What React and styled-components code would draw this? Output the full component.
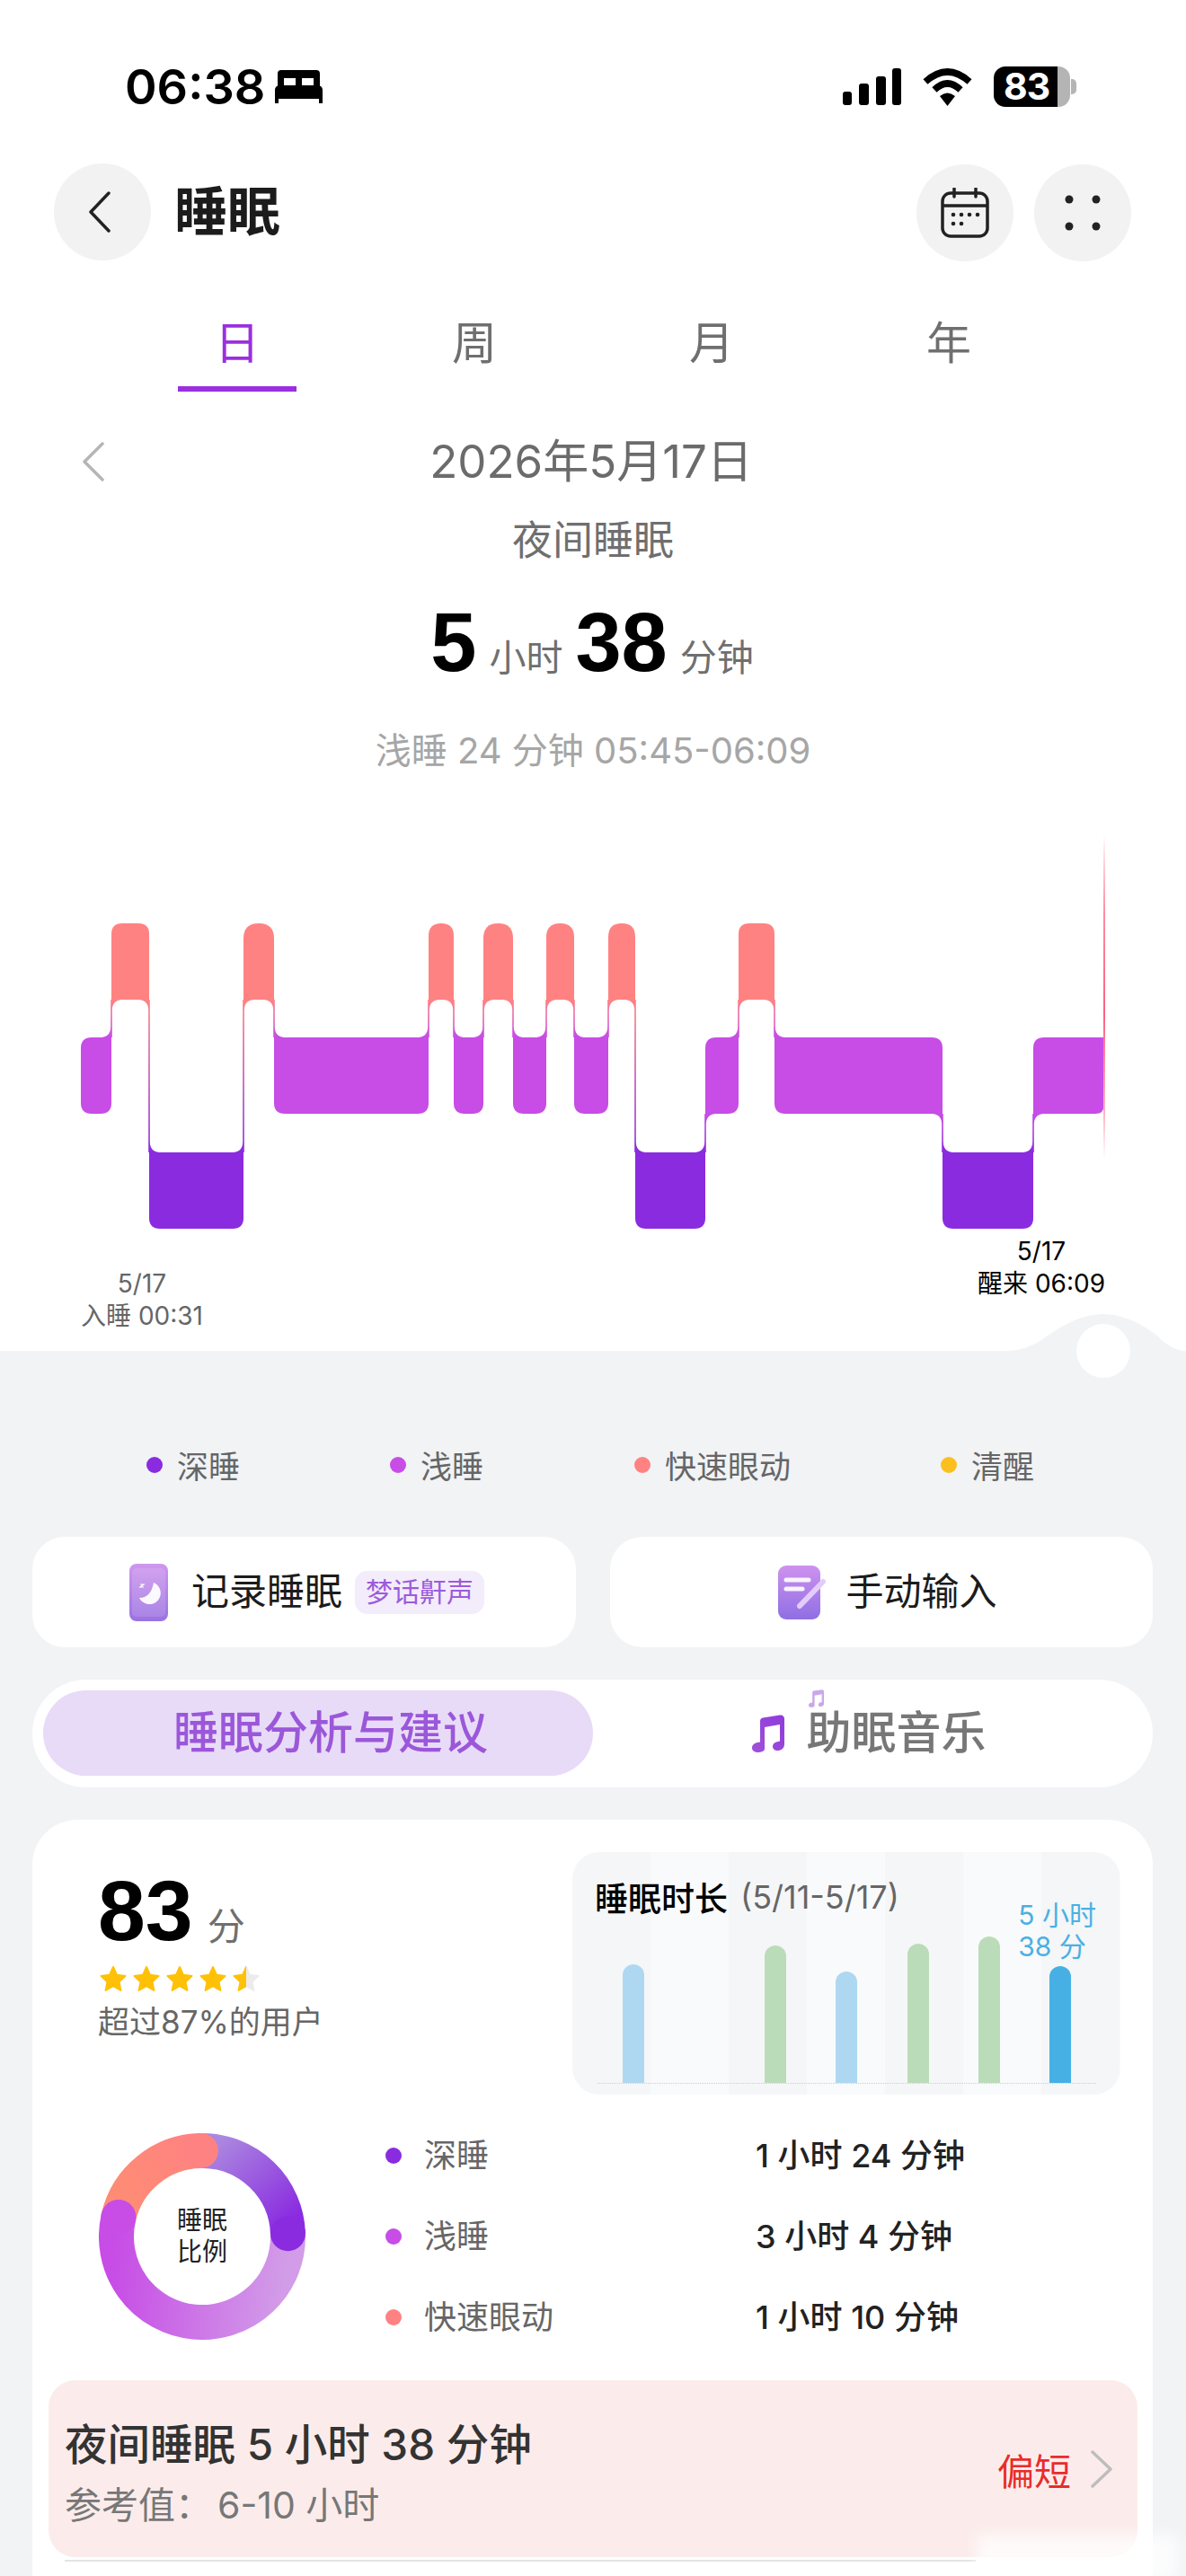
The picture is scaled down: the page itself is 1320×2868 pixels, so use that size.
import React from "react"
import styled, { createGlobalStyle } from "styled-components"

const FONT = `Inter, "Noto Sans CJK SC", sans-serif`
const DEEP = "#8a2be0"
const LIGHT = "#c74de6"
const REM = "#ff8282"
const AWAKE = "#fcbf20"

const GlobalStyle = createGlobalStyle`
  html, body {
    margin: 0;
    padding: 0;
    background: #f1f3f5;
    font-family: ${FONT};
  }
  * { box-sizing: border-box; }
`

const Page = styled.div`
  position: relative;
  width: 1320px;
  height: 2868px;
  overflow: hidden;
  background: #f1f3f5;
`
const TopSection = styled.section`
  position: relative;
  height: 1504px;
  padding-top: 74px;
  background: #fff;
`
const StatusBar = styled.div`
  display: flex;
  justify-content: space-between;
  align-items: center;
  height: 45px;
  padding: 0 129px 0 139px;
`
const StatusLeft = styled.div`
  display: flex;
  align-items: center;
  gap: 11px;
`
const Clock = styled.span`
  font-size: 54px;
  font-weight: 600;
  line-height: 45px;
  color: #000;
`
const StatusRight = styled.div`
  display: flex;
  align-items: center;
  gap: 23px;
`
const Battery = styled.div`
  position: relative;
  width: 85px;
  height: 45px;
  border-radius: 13px;
  background: linear-gradient(90deg, #000 84%, #b4b4b4 84%);
  color: #fff;
  font-size: 41px;
  font-weight: 700;
  line-height: 45px;
  padding-left: 11px;
  letter-spacing: -1px;
  &::after {
    content: "";
    position: absolute;
    right: -7px;
    top: 14px;
    width: 6px;
    height: 17px;
    border-radius: 0 5px 5px 0;
    background: #b4b4b4;
  }
`
const NavBar = styled.div`
  display: flex;
  align-items: center;
  margin-top: 62px;
  padding: 0 61px 0 60px;
`
const RoundButton = styled.button`
  display: flex;
  align-items: center;
  justify-content: center;
  width: 108px;
  height: 108px;
  padding: 0 ${(p) => p.$inset || 0}px 0 0;
  border: 0;
  border-radius: 50%;
  background: #f2f2f2;
  margin-top: ${(p) => p.$offset || 0}px;
`
const Title = styled.h1`
  flex: 1;
  margin: 0 0 10px 26px;
  font-size: 59px;
  font-weight: 700;
  color: #1c1c1c;
`
const NavActions = styled.div`
  display: flex;
  gap: 23px;
`
const Tabs = styled.div`
  display: grid;
  grid-template-columns: repeat(4, 264px);
  margin: 51px 0 0 132px;
`
const Tab = styled.div`
  display: flex;
  flex-direction: column;
  align-items: center;
  font-size: 50px;
  line-height: 80px;
  height: 94px;
  color: ${(p) => (p.$active ? "#9b2fe0" : "#6f6f6f")};
`
const TabMark = styled.div`
  width: 132px;
  height: 6px;
  margin-top: 8px;
  background: #9b2fe0;
`
const DateRow = styled.div`
  display: grid;
  grid-template-columns: 1fr auto 1fr;
  align-items: center;
  height: 60px;
  margin-top: 37px;
  padding-right: 4px;
  font-size: 51px;
  color: #6b6b6b;
`
const DateBack = styled.div`
  display: flex;
  padding: 8px 0 0 92px;
`
const Caption = styled.div`
  height: 56px;
  margin-top: 41px;
  font-size: 45px;
  line-height: 56px;
  text-align: center;
  color: #6f6f6f;
`
const Duration = styled.div`
  display: flex;
  justify-content: center;
  align-items: baseline;
  gap: 14px;
  height: 96px;
  margin-top: 37px;
  padding-right: 2px;
  line-height: 96px;
`
const BigNumber = styled.span`
  font-family: "Liberation Sans", sans-serif;
  font-size: 92px;
  font-weight: 700;
  color: #000;
`
const Unit = styled.span`
  font-size: 41px;
  color: #6f6f6f;
`
const Detail = styled.div`
  height: 56px;
  margin-top: 45px;
  font-size: 40px;
  line-height: 56px;
  text-align: center;
  color: #a6a6a6;
`
const ChartSvg = styled.svg`
  display: block;
  width: 1320px;
  height: 460px;
  margin-top: 56px;
`
const ChartLabels = styled.div`
  display: flex;
  justify-content: space-between;
  align-items: flex-end;
  padding: 0 90px 0 90px;
  margin-top: -5px;
`
const ChartLabel = styled.div`
  font-size: 28px;
  line-height: 36px;
  text-align: center;
  white-space: nowrap;
  color: ${(p) => (p.$end ? "#000" : "#666")};
  margin-top: ${(p) => (p.$end ? 0 : 36)}px;
  margin-bottom: ${(p) => (p.$end ? 36 : 0)}px;
`
const Bump = styled.svg`
  position: absolute;
  left: 1120px;
  top: 1456px;
  width: 200px;
  height: 84px;
`
const Legend = styled.div`
  display: grid;
  grid-template-columns: 271px 272px 341px auto;
  height: 48px;
  margin: 101px 0 0 163px;
`
const LegendItem = styled.div`
  display: flex;
  align-items: center;
  gap: 16px;
  font-size: 35px;
  color: #666;
`
const Dot = styled.i`
  flex: none;
  display: block;
  width: 18px;
  height: 18px;
  border-radius: 50%;
  background: ${(p) => p.$color};
`
const ActionRow = styled.div`
  display: grid;
  grid-template-columns: 605px 604px;
  gap: 38px;
  margin: 58px 0 0 36px;
`
const ActionCard = styled.div`
  display: flex;
  align-items: center;
  justify-content: ${(p) => (p.$center ? "center" : "flex-start")};
  gap: ${(p) => (p.$center ? 21 : 26)}px;
  height: 123px;
  padding-left: ${(p) => (p.$center ? "14px" : "108px")};
  border-radius: 36px;
  background: #fff;
  font-size: 42px;
  color: #1c1c1c;
`
const ActionText = styled.span`
  padding-bottom: 8px;
  white-space: nowrap;
`
const Chip = styled.span`
  margin-left: -12px;
  padding: 0 12px;
  height: 48px;
  border-radius: 14px;
  background: #f3ecfb;
  color: #9c5bdc;
  font-size: 30px;
  line-height: 46px;
  white-space: nowrap;
`
const Segmented = styled.div`
  display: grid;
  grid-template-columns: 612px 1fr;
  height: 120px;
  margin: 36px 37px 0 36px;
  padding: 12px;
  border-radius: 60px;
  background: #fff;
`
const SegmentItem = styled.div`
  position: relative;
  display: flex;
  align-items: center;
  justify-content: center;
  gap: 24px;
  height: 95px;
  padding-left: ${(p) => (p.$active ? 28 : 0)}px;
  border-radius: 48px;
  background: ${(p) => (p.$active ? "#e8dbf7" : "transparent")};
  color: ${(p) => (p.$active ? "#9b57d9" : "#777")};
  font-size: 50px;
  font-weight: 500;
`
const SegmentLabel = styled.span`
  padding-bottom: 10px;
`
const SmallNote = styled.svg`
  position: absolute;
  left: 238px;
  top: -1px;
  width: 20px;
  height: 20px;
`
const MainCard = styled.div`
  height: 900px;
  margin: 36px 37px 0 36px;
  padding-top: 36px;
  border-radius: 50px 50px 0 0;
  background: #fff;
`
const Overview = styled.div`
  display: flex;
  justify-content: space-between;
  padding: 0 36px 0 73px;
`
const ScoreBlock = styled.div`
  display: flex;
  flex-direction: column;
  align-items: flex-start;
`
const ScoreLine = styled.div`
  display: flex;
  align-items: baseline;
  gap: 16px;
  height: 108px;
  margin-top: 11px;
  line-height: 108px;
`
const ScoreValue = styled.span`
  font-family: "Liberation Sans", sans-serif;
  font-size: 95px;
  font-weight: 700;
  color: #000;
`
const ScoreUnit = styled.span`
  font-size: 42px;
  color: #6f6f6f;
`
const Stars = styled.div`
  display: flex;
  gap: 7px;
  margin: 7px 0 0 2px;
`
const ScoreNote = styled.div`
  margin-top: 9px;
  font-size: 35px;
  line-height: 48px;
  color: #666;
`
const TrendCard = styled.div`
  width: 610px;
  height: 270px;
  padding: 26px 27px 0 25px;
  border-radius: 30px;
  background: repeating-linear-gradient(90deg, #f5f6f8 0 87px, #f9fafb 87px 174px);
`
const TrendTitle = styled.div`
  display: flex;
  align-items: center;
  gap: 14px;
  height: 48px;
  font-size: 37px;
  font-weight: 500;
  color: #000;
`
const TrendRange = styled.span`
  font-size: 36px;
  font-weight: 400;
  color: #666;
`
const TrendPlot = styled.div`
  display: grid;
  grid-template-columns: repeat(7, 1fr);
  align-items: end;
  justify-items: center;
  width: 555px;
  height: 184px;
  margin: 0 0 0 3px;
  border-bottom: 1px dotted #c9cdd0;
`
const TrendBar = styled.div`
  position: relative;
  width: 24px;
  height: ${(p) => p.$h}px;
  border-radius: 12px 12px 0 0;
  background: ${(p) => p.$color};
`
const TrendTip = styled.div`
  position: absolute;
  left: -35px;
  bottom: 100%;
  margin-bottom: 4px;
  width: 100px;
  font-size: 30px;
  line-height: 35px;
  color: #4ab0e3;
  white-space: nowrap;
`
const Proportion = styled.div`
  display: flex;
  align-items: center;
  height: 270px;
  margin-top: 23px;
  padding-left: 74px;
`
const DonutWrap = styled.div`
  position: relative;
  flex: none;
  width: 230px;
  height: 230px;
`
const DonutText = styled.div`
  position: absolute;
  inset: 0;
  display: flex;
  align-items: center;
  justify-content: center;
  font-size: 28px;
  line-height: 35px;
  text-align: center;
  color: #222;
`
const StatList = styled.div`
  margin-left: 89px;
`
const StatRow = styled.div`
  display: grid;
  grid-template-columns: 18px 344px auto;
  column-gap: 25px;
  align-items: center;
  height: 90px;
  font-size: 36px;
  white-space: nowrap;
`
const StatLabel = styled.span`
  padding-bottom: 6px;
  color: #666;
`
const StatValue = styled.span`
  padding-bottom: 6px;
  color: #222;
  font-weight: 500;
`
const Advice = styled.div`
  display: flex;
  justify-content: space-between;
  align-items: center;
  height: 197px;
  margin: 25px 17px 0 18px;
  padding: 0 28px 0 18px;
  border-radius: 30px;
  background: #fbeceb;
`
const AdviceText = styled.div`
  display: flex;
  flex-direction: column;
  gap: 7px;
  padding-top: 14px;
`
const AdviceTitle = styled.div`
  font-size: 47.500px;
  font-weight: 500;
  line-height: 60px;
  color: #333;
`
const AdviceNote = styled.div`
  display: flex;
  gap: 6px;
  font-size: 41px;
  line-height: 60px;
  color: #777;
`
const AdviceStatus = styled.div`
  display: flex;
  align-items: center;
  gap: 22px;
  font-size: 41px;
  color: #e92c2c;
`
const Rule = styled.div`
  height: 2px;
  margin: 3px 197px 0 36px;
  background: #e3e3e3;
`
const Watermark = styled.div`
  position: absolute;
  right: 8px;
  bottom: -6px;
  width: 225px;
  height: 52px;
  background: rgba(255, 255, 255, 0.75);
  filter: blur(8px);
`

const ROWS = { rem: [1028, 1113], light: [1155, 1240], deep: [1283, 1368] }
const LEVEL = { rem: 0, light: 1, deep: 2 }
const COLORS = { rem: REM, light: LIGHT, deep: DEEP }
const SEGMENTS = [
  ["light", 90, 124],
  ["rem", 124, 166],
  ["deep", 166, 271],
  ["rem", 271, 305],
  ["light", 305, 477],
  ["rem", 477, 505],
  ["light", 505, 538],
  ["rem", 538, 571],
  ["light", 571, 608],
  ["rem", 608, 639],
  ["light", 639, 677],
  ["rem", 677, 707],
  ["deep", 707, 785],
  ["light", 785, 822],
  ["rem", 822, 862],
  ["light", 862, 1049],
  ["deep", 1049, 1150],
  ["light", 1150, 1229],
]

// rectangle with its own radius per corner: tl, tr, br, bl
const roundedPath = (x0, y0, x1, y1, [tl, tr, br, bl]) =>
  `M${x0 + tl} ${y0}H${x1 - tr}Q${x1} ${y0} ${x1} ${y0 + tr}V${y1 - br}Q${x1} ${y1} ${x1 - br} ${y1}H${x0 + bl}Q${x0} ${y1} ${x0} ${y1 - bl}V${y0 + tl}Q${x0} ${y0} ${x0 + tl} ${y0}Z`

function SleepChart() {
  const links = []
  const holes = []
  const bars = []
  SEGMENTS.forEach(([stage, x0, x1], i) => {
    const level = LEVEL[stage]
    const prev = SEGMENTS[i - 1]
    const next = SEGMENTS[i + 1]
    const prevLevel = prev ? LEVEL[prev[0]] : level
    const nextLevel = next ? LEVEL[next[0]] : level
    const [top, bottom] = ROWS[stage]
    const w = x1 - x0
    const r = stage === "rem" && w < 40 ? w / 2 : Math.min(12, w / 2)
    const hr = Math.min((w - 2) / 2, 12)
    if (next && nextLevel !== level) {
      const upper = level < nextLevel ? stage : next[0]
      const lower = level < nextLevel ? next[0] : stage
      links.push({ x: x1, upper, lower, id: `link${i}` })
    }
    if (prevLevel < level || nextLevel < level) {
      holes.push(roundedPath(x0 + 0.8, 900, x1 - 0.8, top, [0, 0, hr, hr]))
    }
    if (prevLevel > level || nextLevel > level) {
      holes.push(roundedPath(x0 + 0.8, bottom, x1 - 0.8, 1400, [hr, hr, 0, 0]))
    }
    const corners = [
      prevLevel < level ? 0 : r,
      nextLevel < level ? 0 : r,
      nextLevel > level ? 0 : r,
      prevLevel > level ? 0 : r,
    ]
    if (i === SEGMENTS.length - 1) {
      corners[1] = 0
      corners[2] = 10
    }
    bars.push(<path key={i} d={roundedPath(x0, top, x1, bottom, corners)} fill={COLORS[stage]} />)
  })
  return (
    <ChartSvg viewBox="0 920 1320 460">
      <defs>
        {links.map((l) => (
          <linearGradient
            key={l.id}
            id={l.id}
            gradientUnits="userSpaceOnUse"
            x1="0"
            x2="0"
            y1={ROWS[l.upper][1]}
            y2={ROWS[l.lower][0]}
          >
            <stop offset="0" stopColor={COLORS[l.upper]} />
            <stop offset="1" stopColor={COLORS[l.lower]} />
          </linearGradient>
        ))}
        <linearGradient id="endLine" x1="0" x2="0" y1="0" y2="1">
          <stop offset="0" stopColor="#ff6f8c" stopOpacity="0" />
          <stop offset="0.25" stopColor="#ff8aa0" />
          <stop offset="0.55" stopColor="#ff5f82" />
          <stop offset="0.85" stopColor="#ffb0c0" />
          <stop offset="1" stopColor="#ffb0c0" stopOpacity="0" />
        </linearGradient>
      </defs>
      {links.map((l) => (
        <rect
          key={l.id}
          x={l.x - 10}
          y={ROWS[l.upper][1]}
          width="20"
          height={ROWS[l.lower][0] - ROWS[l.upper][1]}
          fill={`url(#${l.id})`}
        />
      ))}
      {holes.map((d, i) => (
        <path key={i} d={d} fill="#fff" />
      ))}
      {bars}
      <rect x="1228" y="930" width="2" height="360" fill="url(#endLine)" />
    </ChartSvg>
  )
}

function arc(cx, cy, r, from, to) {
  const pt = (a) => {
    const t = ((a - 90) * Math.PI) / 180
    return [cx + r * Math.cos(t), cy + r * Math.sin(t)]
  }
  const [x0, y0] = pt(from)
  const [x1, y1] = pt(to)
  return `M${x0} ${y0}A${r} ${r} 0 ${to - from > 180 ? 1 : 0} 1 ${x1} ${y1}`
}

function capAt(cx, cy, r, a) {
  const t = ((a - 90) * Math.PI) / 180
  return { cx: cx + r * Math.cos(t), cy: cy + r * Math.sin(t) }
}

function Donut() {
  return (
    <DonutWrap>
      <svg width="230" height="230" viewBox="0 0 230 230">
        <defs>
          <linearGradient id="dDeep" gradientUnits="userSpaceOnUse" x1="125" y1="15" x2="205" y2="105">
            <stop offset="0" stopColor="#ab88df" />
            <stop offset="1" stopColor="#8a2be0" />
          </linearGradient>
          <linearGradient id="dLight" gradientUnits="userSpaceOnUse" x1="210" y1="130" x2="20" y2="110">
            <stop offset="0" stopColor="#d29ce8" />
            <stop offset="1" stopColor="#c74de6" />
          </linearGradient>
          <linearGradient id="dRem" gradientUnits="userSpaceOnUse" x1="30" y1="80" x2="115" y2="20">
            <stop offset="0" stopColor="#fe8c74" />
            <stop offset="1" stopColor="#ff8282" />
          </linearGradient>
        </defs>
        <g fill="none" strokeWidth="39">
          <path d={arc(115, 115, 95.5, 0, 88)} stroke="url(#dDeep)" />
          <path d={arc(115, 115, 95.5, 88, 283)} stroke="url(#dLight)" />
          <path d={arc(115, 115, 95.5, 283, 359)} stroke="url(#dRem)" />
        </g>
        <circle {...capAt(115, 115, 95.5, 88)} r="19.5" fill="#8a2be0" />
        <circle {...capAt(115, 115, 95.5, 283)} r="19.5" fill="#c74de6" />
        <circle {...capAt(115, 115, 95.5, 359)} r="19.5" fill="#ff8282" />
      </svg>
      <DonutText>
        睡眠
        <br />
        比例
      </DonutText>
    </DonutWrap>
  )
}

const STAR = "M15 2l4 8.800 9.500 1.100-7 6.500 1.900 9.500L15 23.200 6.600 27.900l1.900-9.500-7-6.500 9.500-1.100z"

function StarRow() {
  return (
    <Stars>
      {[0, 1, 2, 3].map((i) => (
        <svg key={i} width="30" height="30" viewBox="0 0 30 30">
          <path d={STAR} fill="#ffc107" stroke="#ffc107" strokeWidth="2" strokeLinejoin="round" />
        </svg>
      ))}
      <svg width="30" height="30" viewBox="0 0 30 30">
        <defs>
          <linearGradient id="halfStar">
            <stop offset="0.5" stopColor="#ffc107" />
            <stop offset="0.5" stopColor="#ececec" />
          </linearGradient>
        </defs>
        <path d={STAR} fill="url(#halfStar)" stroke="url(#halfStar)" strokeWidth="2" strokeLinejoin="round" />
      </svg>
    </Stars>
  )
}

const Chevron = ({ dir = "left", w, h, color, sw }) => (
  <svg width={w} height={h} viewBox={`0 0 ${w} ${h}`} fill="none">
    <path
      d={dir === "left" ? `M${w - 2} 2L2 ${h / 2}L${w - 2} ${h - 2}` : `M2 2L${w - 2} ${h / 2}L2 ${h - 2}`}
      stroke={color}
      strokeWidth={sw}
      strokeLinecap="round"
      strokeLinejoin="round"
    />
  </svg>
)

const BedIcon = () => (
  <svg width="53" height="37" viewBox="0 0 53 37">
    <path
      fillRule="evenodd"
      d="M7 0h39a4 4 0 0 1 4 4v13.500c2 1 3 2.600 3 4.500v15h-4v-5H4v5H0V22c0-2 1-3.500 3-4.500V4a4 4 0 0 1 4-4zM10 9v8h13V9zM30 9v8h13V9z"
    />
  </svg>
)

const SignalIcon = () => (
  <svg width="65" height="41" viewBox="0 0 65 41">
    <rect x="0" y="26" width="10" height="15" rx="3" />
    <rect x="18" y="17" width="11" height="24" rx="3" />
    <rect x="37" y="9" width="11" height="32" rx="3" />
    <rect x="55" y="0" width="10" height="41" rx="3" />
  </svg>
)

const WifiIcon = () => (
  <svg width="57" height="42" viewBox="0 0 57 42">
    <path d="M4 15Q28.500-7 53 15" fill="none" stroke="#000" strokeWidth="7.500" />
    <path d="M14 24Q28.500 10 43 24" fill="none" stroke="#000" strokeWidth="7.500" />
    <path d="M20 31Q28.500 24 37 31L28.500 42Z" />
  </svg>
)

const CalendarIcon = () => (
  <svg width="54" height="56" viewBox="0 0 54 56" fill="none" stroke="#222">
    <rect x="2" y="6" width="50" height="48" rx="9" strokeWidth="3.500" />
    <path d="M2 20h50" strokeWidth="3.500" />
    <path d="M15 1v9M39 1v9" strokeWidth="3.500" strokeLinecap="round" />
    <g fill="#222" stroke="none">
      <circle cx="14" cy="30" r="2.300" />
      <circle cx="23" cy="30" r="2.300" />
      <circle cx="32" cy="30" r="2.300" />
      <circle cx="41" cy="30" r="2.300" />
      <circle cx="14" cy="40" r="2.300" />
      <circle cx="23" cy="40" r="2.300" />
    </g>
  </svg>
)

const DotsIcon = () => (
  <svg width="40" height="40" viewBox="0 0 40 40" fill="#222">
    <circle cx="5" cy="5" r="4.500" />
    <circle cx="35" cy="5" r="4.500" />
    <circle cx="5" cy="35" r="4.500" />
    <circle cx="35" cy="35" r="4.500" />
  </svg>
)

const MoonCardIcon = () => (
  <svg width="43" height="64" viewBox="0 0 43 64">
    <defs>
      <linearGradient id="moonBg" x1="0" x2="0" y1="0" y2="1">
        <stop offset="0" stopColor="#cf97ee" />
        <stop offset="1" stopColor="#9b72e2" />
      </linearGradient>
    </defs>
    <rect width="43" height="64" rx="8" fill="url(#moonBg)" />
    <rect x="3" y="5" width="37" height="54" rx="5" fill="#fff" opacity="0.12" />
    <path d="M27 21A12.500 12.500 0 1 1 11 38Q24 38 27 21Z" fill="#fff" opacity="0.95" />
    <path d="M12 23h4l-4 3h4" fill="none" stroke="#fff" strokeWidth="1.200" />
  </svg>
)

const NoteIcon = () => (
  <svg width="54" height="60" viewBox="0 0 54 60">
    <defs>
      <linearGradient id="noteBg" x1="0" x2="0" y1="0" y2="1">
        <stop offset="0" stopColor="#cd92ef" />
        <stop offset="1" stopColor="#8f6fe3" />
      </linearGradient>
    </defs>
    <rect width="47" height="60" rx="9" fill="url(#noteBg)" />
    <path d="M9 16h25M9 26h18" stroke="#fff" strokeOpacity="0.9" strokeWidth="5" strokeLinecap="round" />
    <path d="M50 18L24 45" stroke="#e3ccf9" strokeWidth="6" strokeLinecap="round" />
  </svg>
)

const MUSIC_PATH =
  "M12 7c0-2 1.200-3.300 3-3.600L34 .6c3-.4 5 1.400 5 4V33c0 4.500-3.800 7-7.500 7-3.500 0-5.500-2-5.500-4.500 0-3 2.500-5 6-5.500l2-.4V11L17 14v24c0 .6-.2 1.200-.4 1.500C15.500 41 13 42 10 42c-4 0-7-1.800-7-5s3-5.500 6-6l3-.5z"

const MusicIcon = () => (
  <svg width="40" height="42" viewBox="0 0 40 42">
    <defs>
      <linearGradient id="musicFill" x1="1" x2="0" y1="0" y2="1">
        <stop offset="0" stopColor="#8f3bdc" />
        <stop offset="1" stopColor="#a052d8" />
      </linearGradient>
    </defs>
    <path d={MUSIC_PATH} fill="url(#musicFill)" />
  </svg>
)

const TREND = [
  { h: 132, color: "#aed8f1" },
  { h: 0, color: "transparent" },
  { h: 153, color: "#bbdcb9" },
  { h: 124, color: "#aed8f1" },
  { h: 155, color: "#bbdcb9" },
  { h: 163, color: "#bbdcb9" },
  { h: 130, color: "#46b0e4", tip: true },
]

const STATS = [
  { label: "深睡", value: "1 小时 24 分钟", color: DEEP },
  { label: "浅睡", value: "3 小时 4 分钟", color: LIGHT },
  { label: "快速眼动", value: "1 小时 10 分钟", color: REM },
]

export default function App() {
  return (
    <Page>
      <GlobalStyle />
      <TopSection>
        <StatusBar>
          <StatusLeft>
            <Clock>06:38</Clock>
            <BedIcon />
          </StatusLeft>
          <StatusRight>
            <SignalIcon />
            <WifiIcon />
            <Battery>83</Battery>
          </StatusRight>
        </StatusBar>
        <NavBar>
          <RoundButton $inset={6}>
            <Chevron w={24} h={46} color="#222" sw={3.5} />
          </RoundButton>
          <Title>睡眠</Title>
          <NavActions>
            <RoundButton $offset={2}>
              <CalendarIcon />
            </RoundButton>
            <RoundButton $offset={2}>
              <DotsIcon />
            </RoundButton>
          </NavActions>
        </NavBar>
        <Tabs>
          <Tab $active>
            日<TabMark />
          </Tab>
          <Tab>周</Tab>
          <Tab>月</Tab>
          <Tab>年</Tab>
        </Tabs>
        <DateRow>
          <DateBack>
            <Chevron w={24} h={44} color="#b5b5b5" sw={3.5} />
          </DateBack>
          <span>2026年5月17日</span>
        </DateRow>
        <Caption>夜间睡眠</Caption>
        <Duration>
          <BigNumber>5</BigNumber>
          <Unit>小时</Unit>
          <BigNumber>38</BigNumber>
          <Unit>分钟</Unit>
        </Duration>
        <Detail>浅睡 24 分钟 05:45-06:09</Detail>
        <SleepChart />
        <ChartLabels>
          <ChartLabel>
            5/17
            <br />
            入睡 00:31
          </ChartLabel>
          <ChartLabel $end>
            5/17
            <br />
            醒来 06:09
          </ChartLabel>
        </ChartLabels>
      </TopSection>
      <Bump viewBox="0 0 200 84">
        <path d="M0 48Q24 48 46 31Q80 7 108 7Q136 7 168 31Q184 48 200 48V84H0Z" fill="#f1f3f5" />
        <circle cx="108" cy="48" r="30" fill="#fff" />
      </Bump>
      <Legend>
        <LegendItem>
          <Dot $color={DEEP} />
          深睡
        </LegendItem>
        <LegendItem>
          <Dot $color={LIGHT} />
          浅睡
        </LegendItem>
        <LegendItem>
          <Dot $color={REM} />
          快速眼动
        </LegendItem>
        <LegendItem>
          <Dot $color={AWAKE} />
          清醒
        </LegendItem>
      </Legend>
      <ActionRow>
        <ActionCard>
          <MoonCardIcon />
          <ActionText>记录睡眠</ActionText>
          <Chip>梦话鼾声</Chip>
        </ActionCard>
        <ActionCard $center>
          <NoteIcon />
          <ActionText>手动输入</ActionText>
        </ActionCard>
      </ActionRow>
      <Segmented>
        <SegmentItem $active>
          <SegmentLabel>睡眠分析与建议</SegmentLabel>
        </SegmentItem>
        <SegmentItem>
          <MusicIcon />
          <SegmentLabel>助眠音乐</SegmentLabel>
          <SmallNote viewBox="0 0 40 42">
            <path d={MUSIC_PATH} fill="#c9a8ea" />
          </SmallNote>
        </SegmentItem>
      </Segmented>
      <MainCard>
        <Overview>
          <ScoreBlock>
            <ScoreLine>
              <ScoreValue>83</ScoreValue>
              <ScoreUnit>分</ScoreUnit>
            </ScoreLine>
            <StarRow />
            <ScoreNote>超过87%的用户</ScoreNote>
          </ScoreBlock>
          <TrendCard>
            <TrendTitle>
              睡眠时长
              <TrendRange>(5/11-5/17)</TrendRange>
            </TrendTitle>
            <TrendPlot>
              {TREND.map((b, i) => (
                <TrendBar key={i} $h={b.h} $color={b.color}>
                  {b.tip && (
                    <TrendTip>
                      5 小时
                      <br />
                      38 分
                    </TrendTip>
                  )}
                </TrendBar>
              ))}
            </TrendPlot>
          </TrendCard>
        </Overview>
        <Proportion>
          <Donut />
          <StatList>
            {STATS.map((s) => (
              <StatRow key={s.label}>
                <Dot $color={s.color} />
                <StatLabel>{s.label}</StatLabel>
                <StatValue>{s.value}</StatValue>
              </StatRow>
            ))}
          </StatList>
        </Proportion>
        <Advice>
          <AdviceText>
            <AdviceTitle>夜间睡眠 5 小时 38 分钟</AdviceTitle>
            <AdviceNote>
              <span>参考值：</span>
              <span>6-10 小时</span>
            </AdviceNote>
          </AdviceText>
          <AdviceStatus>
            偏短
            <Chevron dir="right" w={24} h={42} color="#bdbdbd" sw={3.5} />
          </AdviceStatus>
        </Advice>
        <Rule />
      </MainCard>
      <Watermark />
    </Page>
  )
}
